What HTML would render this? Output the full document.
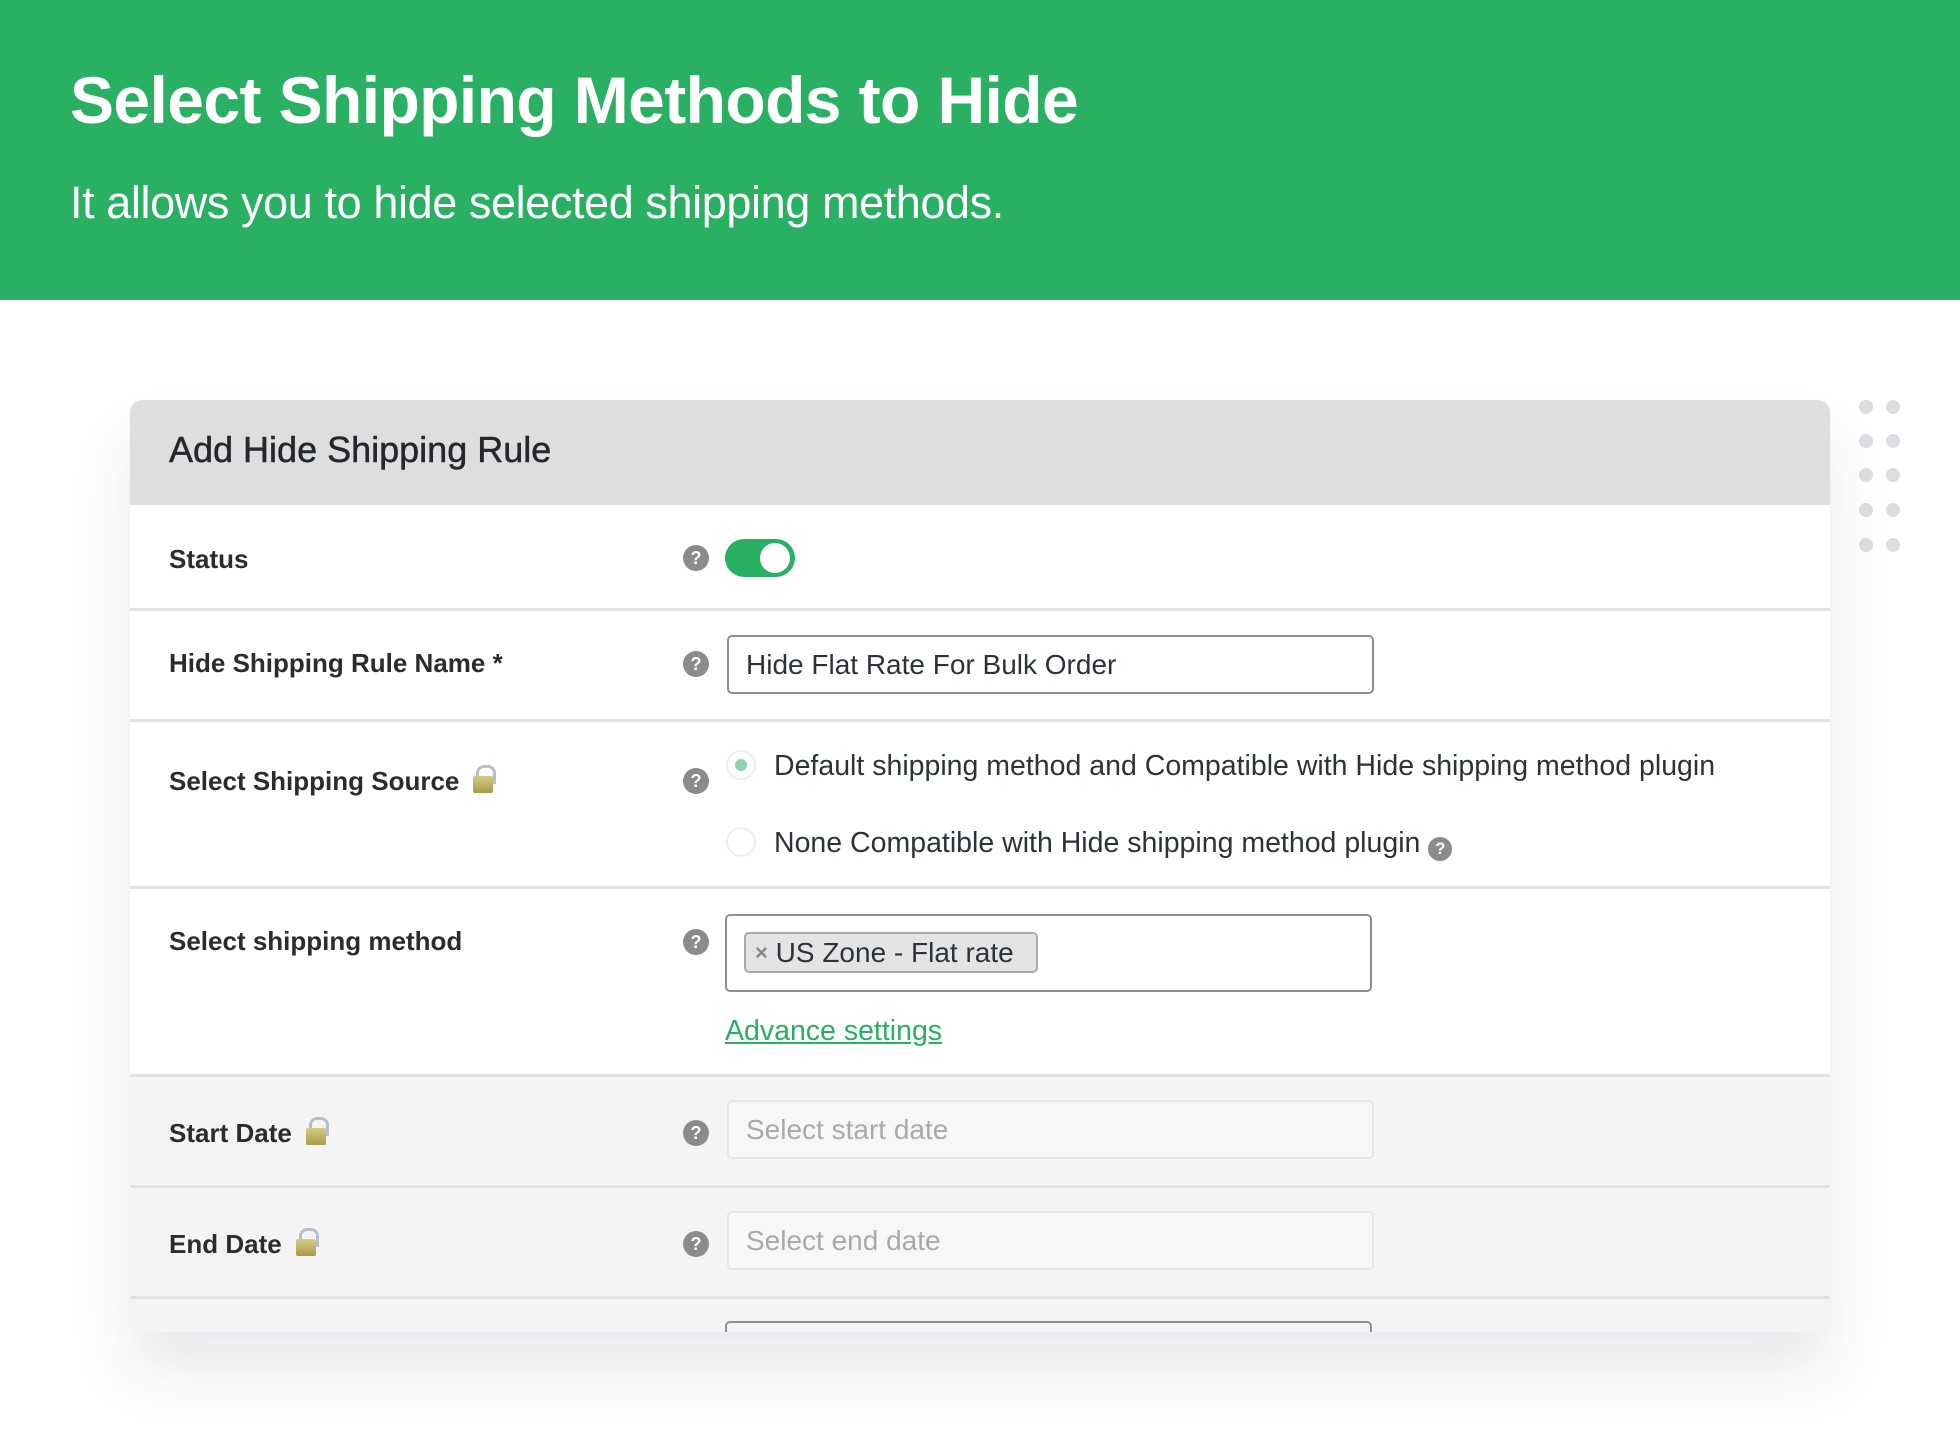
<!DOCTYPE html>
<html><head><meta charset="utf-8"><style>
*{margin:0;padding:0;box-sizing:border-box}
body{width:1960px;height:1432px;background:#fff;font-family:"Liberation Sans",Arial,sans-serif;position:relative;overflow:hidden;color:#2c3338}
.hdr{position:absolute;left:0;top:0;width:1960px;height:300px;background:#29b063}
.h1{position:absolute;left:70px;top:62px;font-size:66px;font-weight:bold;color:#fff;letter-spacing:-0.6px;white-space:nowrap}
.h2{position:absolute;left:70px;top:177px;font-size:45px;color:#fff;letter-spacing:-0.4px;white-space:nowrap}
.card{position:absolute;left:130px;top:400px;width:1700px;height:932px;border-radius:12px 12px 0 12px;overflow:hidden;background:#fff;box-shadow:0 40px 60px rgba(40,50,80,0.10)}
.ch{position:absolute;left:0;top:0;width:1700px;height:105px;background:#dedede;font-size:36px;color:#23282d;padding:29px 0 0 39px;-webkit-text-stroke:0.5px #23282d}
.row{position:absolute;left:0;width:1700px;border-top:3px solid #e2e2e2}
.lbl{position:absolute;left:39px;font-size:26px;font-weight:bold;color:#2c2c2c;white-space:nowrap}
.q{position:absolute;left:553px;width:26px;height:26px;border-radius:50%;background:#8b8b8b;color:#fff;font-size:18px;font-weight:bold;text-align:center;line-height:26px}
.inp{position:absolute;left:597px;width:647px;height:59px;border:2px solid #8c8f94;border-radius:5px;font-size:28px;padding:12px 0 0 17px;color:#2c3338}
.dis{background:#f7f7f7;border:2px solid #e7e7e7;color:#a7aaad}
.lock{display:inline-block;vertical-align:-3px;margin-left:14px;position:relative;width:20px;height:28px}
.lock:before{content:"";position:absolute;left:3px;top:0;width:14px;height:16px;border:3px solid #b7c0c8;border-bottom:none;border-radius:8px 8px 0 0}
.lock:after{content:"";position:absolute;left:0;top:11px;width:20px;height:17px;background:linear-gradient(#d7cb85,#a99a48);border-radius:2px}
.dot{position:absolute;width:14px;height:14px;border-radius:50%;background:#dcdde0}
</style></head><body>
<div class="hdr"><div class="h1">Select Shipping Methods to Hide</div><div class="h2">It allows you to hide selected shipping methods.</div></div>

<div class="dot" style="left:1859px;top:400px"></div><div class="dot" style="left:1886px;top:400px"></div>
<div class="dot" style="left:1859px;top:434px"></div><div class="dot" style="left:1886px;top:434px"></div>
<div class="dot" style="left:1859px;top:468px"></div><div class="dot" style="left:1886px;top:468px"></div>
<div class="dot" style="left:1859px;top:503px"></div><div class="dot" style="left:1886px;top:503px"></div>
<div class="dot" style="left:1859px;top:538px"></div><div class="dot" style="left:1886px;top:538px"></div>

<div class="card">
<div class="ch">Add Hide Shipping Rule</div>

<div class="row" style="top:105px;height:105px;border-top:none">
<div class="lbl" style="top:39px">Status</div>
<div class="q" style="top:40px">?</div>
<div style="position:absolute;left:595px;top:34px;width:70px;height:38px;border-radius:19px;background:#29b063"><div style="position:absolute;right:5px;top:4px;width:30px;height:30px;border-radius:50%;background:#fff"></div></div>
</div>

<div class="row" style="top:208px;height:113px">
<div class="lbl" style="top:37px">Hide Shipping Rule Name *</div>
<div class="q" style="top:40px">?</div>
<div class="inp" style="top:24px">Hide Flat Rate For Bulk Order</div>
</div>

<div class="row" style="top:319px;height:169px">
<div class="lbl" style="top:43px">Select Shipping Source<span class="lock"></span></div>
<div class="q" style="top:46px">?</div>
<div style="position:absolute;left:596px;top:28px;width:30px;height:30px;border-radius:50%;border:2px solid #eee;background:#fff"><div style="position:absolute;left:7px;top:7px;width:12px;height:12px;border-radius:50%;background:#8fd5ac"></div></div>
<div style="position:absolute;left:644px;top:28px;font-size:28.5px;white-space:nowrap">Default shipping method and Compatible with Hide shipping method plugin</div>
<div style="position:absolute;left:596px;top:105px;width:30px;height:30px;border-radius:50%;border:2px solid #eee;background:#fff"></div>
<div style="position:absolute;left:644px;top:105px;font-size:28.5px;white-space:nowrap">None Compatible with Hide shipping method plugin <span style="display:inline-block;width:24px;height:24px;border-radius:50%;background:#8b8b8b;color:#fff;font-size:17px;font-weight:bold;text-align:center;line-height:24px;vertical-align:-2px">?</span></div>
</div>

<div class="row" style="top:486px;height:190px">
<div class="lbl" style="top:37px">Select shipping method</div>
<div class="q" style="top:40px">?</div>
<div class="inp" style="left:595px;top:25px;height:78px;padding:0"><div style="position:absolute;left:17px;top:16px;width:294px;height:41px;background:#e4e4e4;border:2px solid #aaa;border-radius:5px;font-size:28px;line-height:37px;padding-left:9px;color:#2c3338"><span style="color:#888;font-size:22px;font-weight:bold;vertical-align:2px">×</span>&nbsp;US Zone - Flat rate</div></div>
<div style="position:absolute;left:595px;top:126px;font-size:28.5px;color:#29b063;text-decoration:underline">Advance settings</div>
</div>

<div class="row" style="top:674px;height:113px;background:#f4f4f4">
<div class="lbl" style="top:40px">Start Date<span class="lock"></span></div>
<div class="q" style="top:43px">?</div>
<div class="inp dis" style="top:23px">Select start date</div>
</div>

<div class="row" style="top:785px;height:113px;background:#f4f4f4">
<div class="lbl" style="top:40px">End Date<span class="lock"></span></div>
<div class="q" style="top:43px">?</div>
<div class="inp dis" style="top:23px">Select end date</div>
</div>

<div class="row" style="top:896px;height:40px;background:#f4f4f4">
<div class="inp" style="left:595px;top:22px;height:60px"></div>
</div>
</div>
</body></html>
